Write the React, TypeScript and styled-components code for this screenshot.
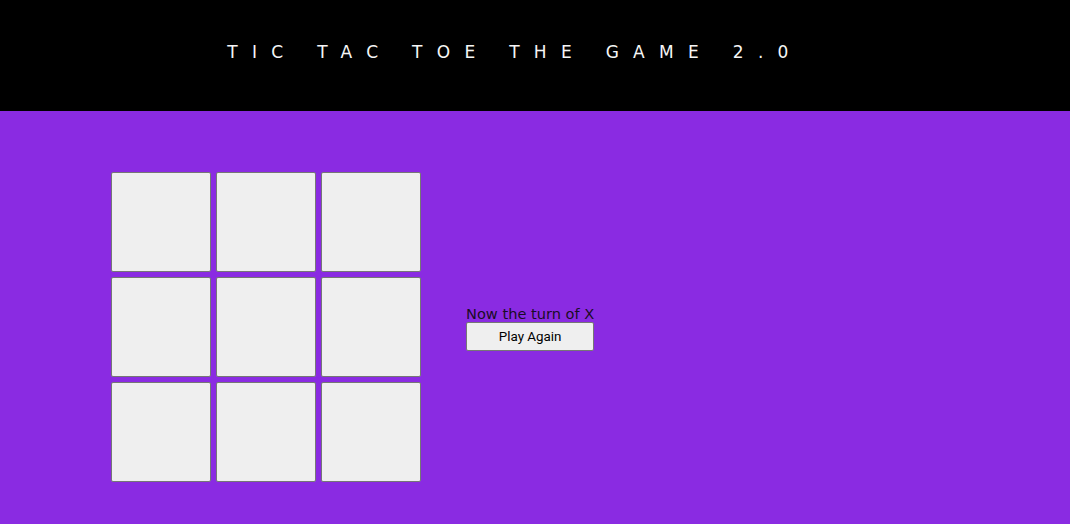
import React, { useState } from 'react';
import styled, { createGlobalStyle } from 'styled-components';

const GlobalStyle = createGlobalStyle`
  html, body {
    margin: 0;
    padding: 0;
    background: #8a2be2;
  }
  body {
    font-family: "Liberation Sans", Arial, sans-serif;
  }
`;

const Header = styled.header`
  height: 111px;
  background: #000;
  display: flex;
  align-items: center;
  justify-content: center;
`;

const Title = styled.h1`
  margin: 0 40px 0 0;
  color: #f6f6f6;
  font-family: "DejaVu Sans", sans-serif;
  font-size: 17px;
  font-weight: 500;
  letter-spacing: 14.3px;
  padding-bottom: 8px;
`;

const Main = styled.main`
  height: 413px;
  box-sizing: border-box;
  padding: 61px 0 0 111px;
  display: flex;
  align-items: flex-start;
`;

const Game = styled.div`
  display: flex;
  align-items: center;
  gap: 45px;
`;

const Board = styled.div`
  display: grid;
  grid-template-columns: repeat(3, 100px);
  grid-auto-rows: 100px;
  gap: 5px;
`;

const Cell = styled.button`
  width: 100px;
  height: 100px;
  padding: 0;
  background: #efefef;
  border: 1px solid #767676;
  border-radius: 2px;
  font-family: "Liberation Sans", Arial, sans-serif;
  font-size: 48px;
  color: #000;
`;

const Status = styled.div`
  display: flex;
  flex-direction: column;
  padding-top: 2px;
`;

const Turn = styled.div`
  font-family: "DejaVu Sans", sans-serif;
  font-size: 14.6px;
  line-height: 17px;
  color: #1a0b26;
`;

const Again = styled.button`
  height: 29px;
  background: #efefef;
  border: 1px solid #767676;
  border-radius: 2px;
  font-family: Roboto, "Liberation Sans", sans-serif;
  font-size: 13.4px;
  color: #000;
`;

export default function App() {
  const [cells, setCells] = useState<string[]>(Array(9).fill(''));
  const [turn, setTurn] = useState<'X' | 'O'>('X');

  const play = (i: number) => {
    if (cells[i]) return;
    const next = [...cells];
    next[i] = turn;
    setCells(next);
    setTurn(turn === 'X' ? 'O' : 'X');
  };

  return (
    <>
      <GlobalStyle />
      <Header>
        <Title>TIC TAC TOE THE GAME 2.0</Title>
      </Header>
      <Main>
        <Game>
          <Board>
            {cells.map((c, i) => (
              <Cell key={i} onClick={() => play(i)}>
                {c}
              </Cell>
            ))}
          </Board>
          <Status>
            <Turn>Now the turn of {turn}</Turn>
            <Again
              onClick={() => {
                setCells(Array(9).fill(''));
                setTurn('X');
              }}
            >
              Play Again
            </Again>
          </Status>
        </Game>
      </Main>
    </>
  );
}
